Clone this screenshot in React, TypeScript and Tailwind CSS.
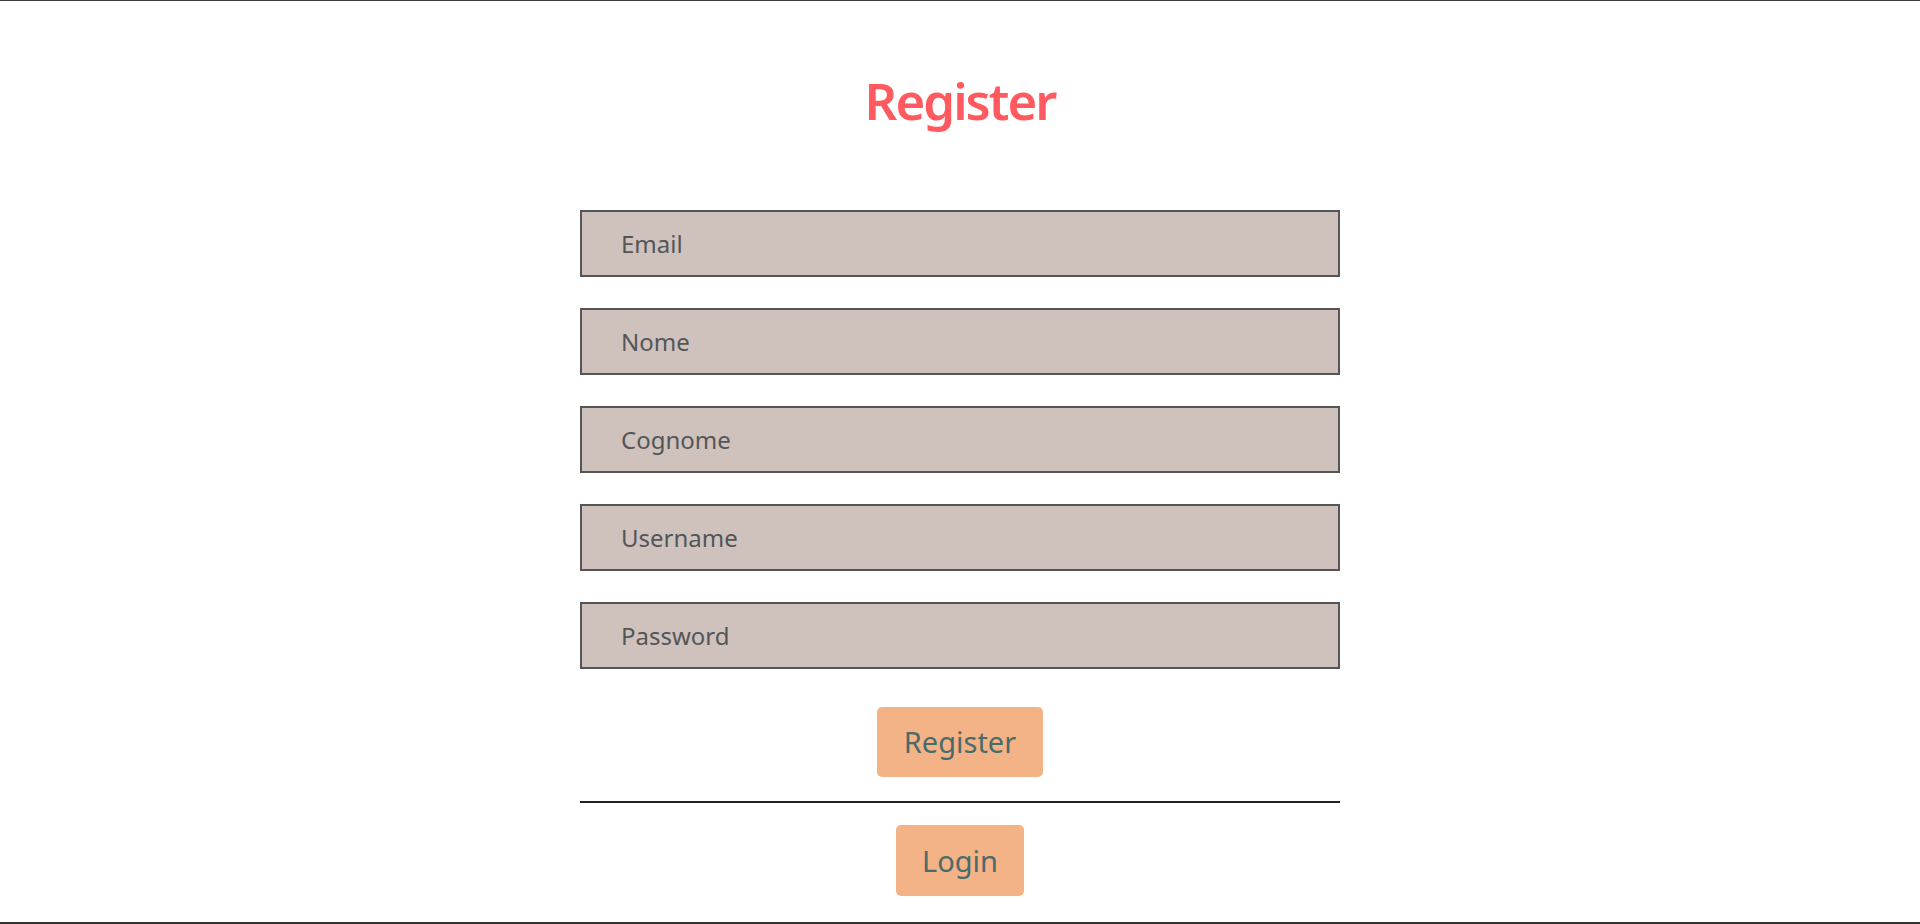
import { useState } from 'react';

const fields = ['Email', 'Nome', 'Cognome', 'Username', 'Password'];

export default function App() {
  const [values, setValues] = useState<Record<string, string>>({});

  return (
    <div className="h-[924px] w-full bg-white border-t border-[#3c3c3c] flex flex-col font-['Noto_Sans',sans-serif] overflow-hidden">
      <div className="flex-1 flex flex-col items-center">
        <h1 className="mt-[74px] text-[51px] leading-none font-semibold tracking-[-2px] text-[#ff5a5f]">Register</h1>

        <form
          className="mt-[84px] w-[760px] flex flex-col items-center"
          onSubmit={(e) => e.preventDefault()}
        >
          <div className="w-full flex flex-col gap-[31px]">
            {fields.map((f) => (
              <input
                key={f}
                type={f === 'Password' ? 'password' : 'text'}
                placeholder={f}
                value={values[f] || ''}
                onChange={(e) => setValues({ ...values, [f]: e.target.value })}
                className="w-full h-[67px] border-2 border-[#555555] bg-[#cfc2bd] pl-[39px] text-[24px] text-[#4a4a4a] placeholder:text-[#535659] outline-none"
              />
            ))}
          </div>

          <button
            type="submit"
            className="mt-[38px] h-[70px] px-[27px] rounded-[5px] bg-[#f4b386] text-[29px] text-[#4a6b6b]"
          >
            Register
          </button>

          <div className="mt-[24px] w-full h-[2px] bg-[#222222]" />

          <button type="button" className="mt-[22px] h-[71px] px-[26px] rounded-[5px] bg-[#f4b386] text-[29px] text-[#4a6b6b]">
            Login
          </button>
        </form>
      </div>
      <div className="h-[2px] bg-[#35312d]" />
    </div>
  );
}
